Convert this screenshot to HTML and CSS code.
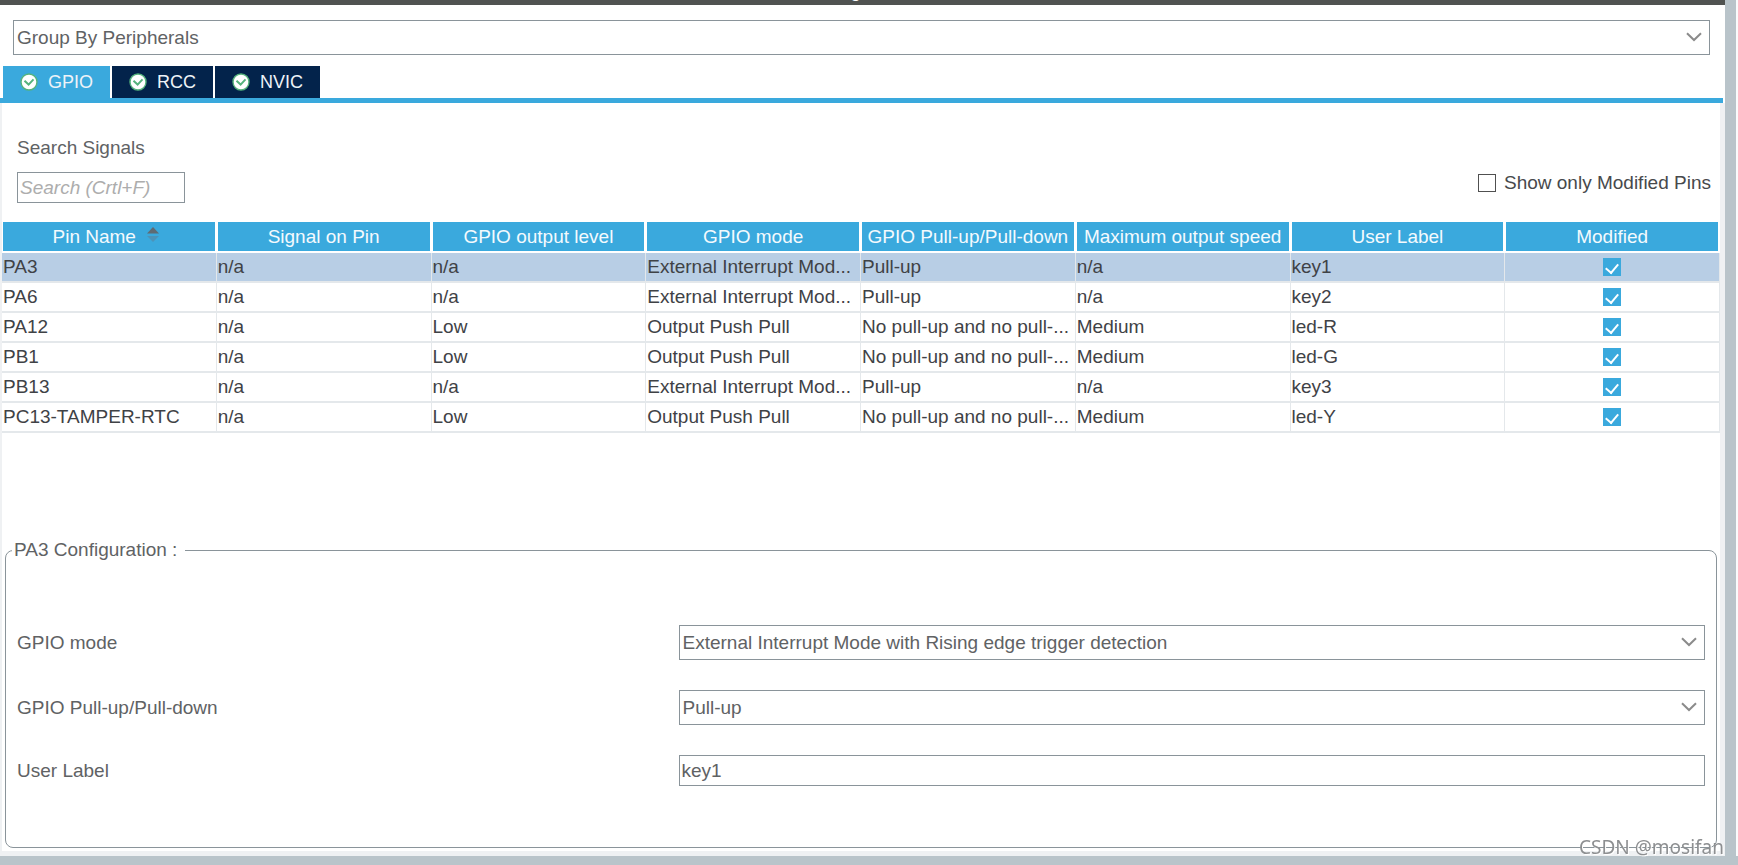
FILE: index.html
```html
<!DOCTYPE html>
<html lang="en">
<head>
<meta charset="utf-8">
<title>Configuration</title>
<link rel="stylesheet" href="styles.css">
</head>
<body>
<svg class="defs" aria-hidden="true">
  <symbol id="chevron" viewBox="0 0 16 10"><path d="M1 1.200 8 8l7-6.800" fill="none" stroke="#8b8b8b" stroke-width="2"/></symbol>
  <symbol id="ok" viewBox="0 0 18 18"><circle cx="9" cy="9" r="8" fill="#fff" stroke="#55b37c" stroke-width="1.400"/><path d="M4.500 7.800 8.600 11.600 13.500 6.400" fill="none" stroke="#55b37c" stroke-width="2"/></symbol>
</svg>
<main class="window">
  <header class="titlebar"><span class="title">Configuration</span></header>

  <div class="grouping">
    <div class="picker">
      <select class="control" aria-label="Grouping"><option>Group By Peripherals</option></select>
      <svg class="arrow"><use href="#chevron"/></svg>
    </div>
  </div>

  <nav class="tabs">
    <button class="tab active" type="button"><svg class="ok"><use href="#ok"/></svg>GPIO</button>
    <button class="tab" type="button"><svg class="ok"><use href="#ok"/></svg>RCC</button>
    <button class="tab" type="button"><svg class="ok"><use href="#ok"/></svg>NVIC</button>
  </nav>

  <section class="panel">
    <div class="filters">
      <div class="search">
        <label for="search">Search Signals</label>
        <input class="control search-box" id="search" type="text" placeholder="Search (Crtl+F)">
      </div>
      <label class="only-modified"><input class="box" type="checkbox">Show only Modified Pins</label>
    </div>

    <table class="pins">
      <thead>
        <tr>
          <th>Pin Name <svg class="sort" viewBox="0 0 12 16"><path d="M0 6.500 6 0l6 6.500z" fill="#5f6b73"/><path d="M0 9h12l-6 6z" fill="#4c93b8"/></svg></th>
          <th>Signal on Pin</th><th>GPIO output level</th><th>GPIO mode</th><th>GPIO Pull-up/Pull-down</th><th>Maximum output speed</th><th>User Label</th><th>Modified</th>
        </tr>
      </thead>
      <tbody>
        <tr class="selected"><td>PA3</td><td>n/a</td><td>n/a</td><td>External Interrupt Mod...</td><td>Pull-up</td><td>n/a</td><td>key1</td><td class="mark"><input class="tick" type="checkbox" checked aria-label="PA3 modified"></td></tr>
        <tr><td>PA6</td><td>n/a</td><td>n/a</td><td>External Interrupt Mod...</td><td>Pull-up</td><td>n/a</td><td>key2</td><td class="mark"><input class="tick" type="checkbox" checked aria-label="PA6 modified"></td></tr>
        <tr><td>PA12</td><td>n/a</td><td>Low</td><td>Output Push Pull</td><td>No pull-up and no pull-...</td><td>Medium</td><td>led-R</td><td class="mark"><input class="tick" type="checkbox" checked aria-label="PA12 modified"></td></tr>
        <tr><td>PB1</td><td>n/a</td><td>Low</td><td>Output Push Pull</td><td>No pull-up and no pull-...</td><td>Medium</td><td>led-G</td><td class="mark"><input class="tick" type="checkbox" checked aria-label="PB1 modified"></td></tr>
        <tr><td>PB13</td><td>n/a</td><td>n/a</td><td>External Interrupt Mod...</td><td>Pull-up</td><td>n/a</td><td>key3</td><td class="mark"><input class="tick" type="checkbox" checked aria-label="PB13 modified"></td></tr>
        <tr><td>PC13-TAMPER-RTC</td><td>n/a</td><td>Low</td><td>Output Push Pull</td><td>No pull-up and no pull-...</td><td>Medium</td><td>led-Y</td><td class="mark"><input class="tick" type="checkbox" checked aria-label="PC13-TAMPER-RTC modified"></td></tr>
      </tbody>
    </table>

    <fieldset class="config">
      <legend>PA3 Configuration :</legend>
      <div class="fields">
        <label for="mode">GPIO mode</label>
        <div class="picker">
          <select class="control" id="mode"><option>External Interrupt Mode with Rising edge trigger detection</option></select>
          <svg class="arrow"><use href="#chevron"/></svg>
        </div>
        <label for="pull">GPIO Pull-up/Pull-down</label>
        <div class="picker">
          <select class="control" id="pull"><option>Pull-up</option></select>
          <svg class="arrow"><use href="#chevron"/></svg>
        </div>
        <label for="user-label">User Label</label>
        <input class="control text" id="user-label" type="text" value="key1">
      </div>
    </fieldset>
  </section>
</main>
<div class="watermark">CSDN @mosifan</div>
</body>
</html>
```
FILE: styles.css
```css
* { box-sizing: border-box; }

body {
  margin: 0;
  min-height: 100vh;
  display: flex;
  flex-direction: column;
  padding-right: 2px;
  border-bottom: 9px solid #b9c4ca;
  background: #fafbfc;
  color: #606264;
  font-family: "Liberation Sans", Arial, sans-serif;
  font-size: 19px;
  line-height: 22px;
}

.defs { display: none; }

.window {
  flex: 1;
  display: flex;
  flex-direction: column;
  border-right: 11px solid #b9c4ca;
  background: #fff;
}

.titlebar {
  height: 5px;
  display: flex;
  justify-content: center;
  align-items: flex-end;
  overflow: hidden;
  background: #505351;
  color: #fff;
}
.title { flex: none; padding-bottom: 3px; }

.grouping { padding: 15px 15px 11px 13px; }

.picker { position: relative; }

.control {
  display: block;
  width: 100%;
  margin: 0;
  border: 1px solid #8a949a;
  border-radius: 0;
  outline: 0;
  background: #fff;
  color: inherit;
  font: inherit;
}
select.control {
  height: 35px;
  padding: 0 28px 0 3px;
  appearance: none;
}
input.control { height: 31px; padding: 0 2px; }

.arrow {
  position: absolute;
  top: 12px;
  right: 8px;
  width: 16px;
  height: 10px;
  pointer-events: none;
}

.tabs {
  display: flex;
  gap: 2px;
  margin-right: 2px;
  padding-left: 3px;
  border-bottom: 5px solid #3aa9dd;
}
.tab {
  display: flex;
  align-items: center;
  gap: 10px;
  height: 32px;
  padding: 0 17px;
  border: 0;
  background: #03234b;
  color: #eef3f8;
  font: inherit;
  font-size: 18px;
}
.tab.active { background: #3aa9dd; }
.ok { width: 18px; height: 18px; }

.panel {
  flex: 1;
  padding: 34px 0 3px;
  border: solid #eff1f3;
  border-width: 0 5px 5px 2px;
}

.filters {
  display: flex;
  justify-content: space-between;
  align-items: flex-end;
  padding: 0 9px 0 15px;
}
.search-box { width: 168px; margin-top: 13px; }
.search-box::placeholder { color: #adadad; font-style: italic; opacity: 1; }

.only-modified {
  display: flex;
  align-items: center;
  gap: 8px;
  padding-bottom: 9px;
  color: #47494c;
}
.box {
  width: 18px;
  height: 18px;
  margin: 0;
  border: 1px solid #505050;
  background: #fff;
  appearance: none;
}

.pins {
  width: 100%;
  margin-top: 19px;
  border-collapse: separate;
  border-spacing: 0;
  table-layout: fixed;
  color: #3f4246;
}
.pins th {
  height: 31px;
  padding: 0;
  border: solid #fff;
  border-width: 0 2px 2px 1px;
  background: #3aa9dd;
  background-clip: padding-box;
  color: #f4fafd;
  font-weight: 400;
  white-space: nowrap;
}
.pins td {
  height: 30px;
  padding: 0 1px;
  overflow: hidden;
  border: solid #e4e8eb;
  border-width: 0 1px 2px 0;
  white-space: nowrap;
}
.selected td { background: #b8cee5; background-clip: padding-box; }
.sort { width: 12px; height: 16px; margin: 0 6px; }

.tick {
  display: block;
  width: 18px;
  height: 18px;
  margin: 0 auto;
  overflow: hidden;
  background: #3aa9dd;
  appearance: none;
}
.tick:checked::before {
  content: "";
  display: block;
  width: 6px;
  height: 10px;
  margin: 3px auto 0;
  border: solid #fff;
  border-width: 0 2px 2px 0;
  transform: rotate(40deg);
}

.config {
  margin: 106px 3px 0;
  padding: 64px 11px 61px;
  border: 1px solid #8a949a;
  border-radius: 8px;
}
.config legend { margin-left: -5px; padding: 0 8px 0 2px; }
.fields {
  display: grid;
  grid-template-columns: 29fr 45fr;
  align-items: center;
  row-gap: 30px;
}

.watermark {
  position: fixed;
  right: 14px;
  bottom: 4px;
  color: #8d8f91;
  font-family: "Noto Sans", sans-serif;
  font-size: 19px;
  line-height: 28px;
  text-shadow: 1px 1px #fff;
}
```
